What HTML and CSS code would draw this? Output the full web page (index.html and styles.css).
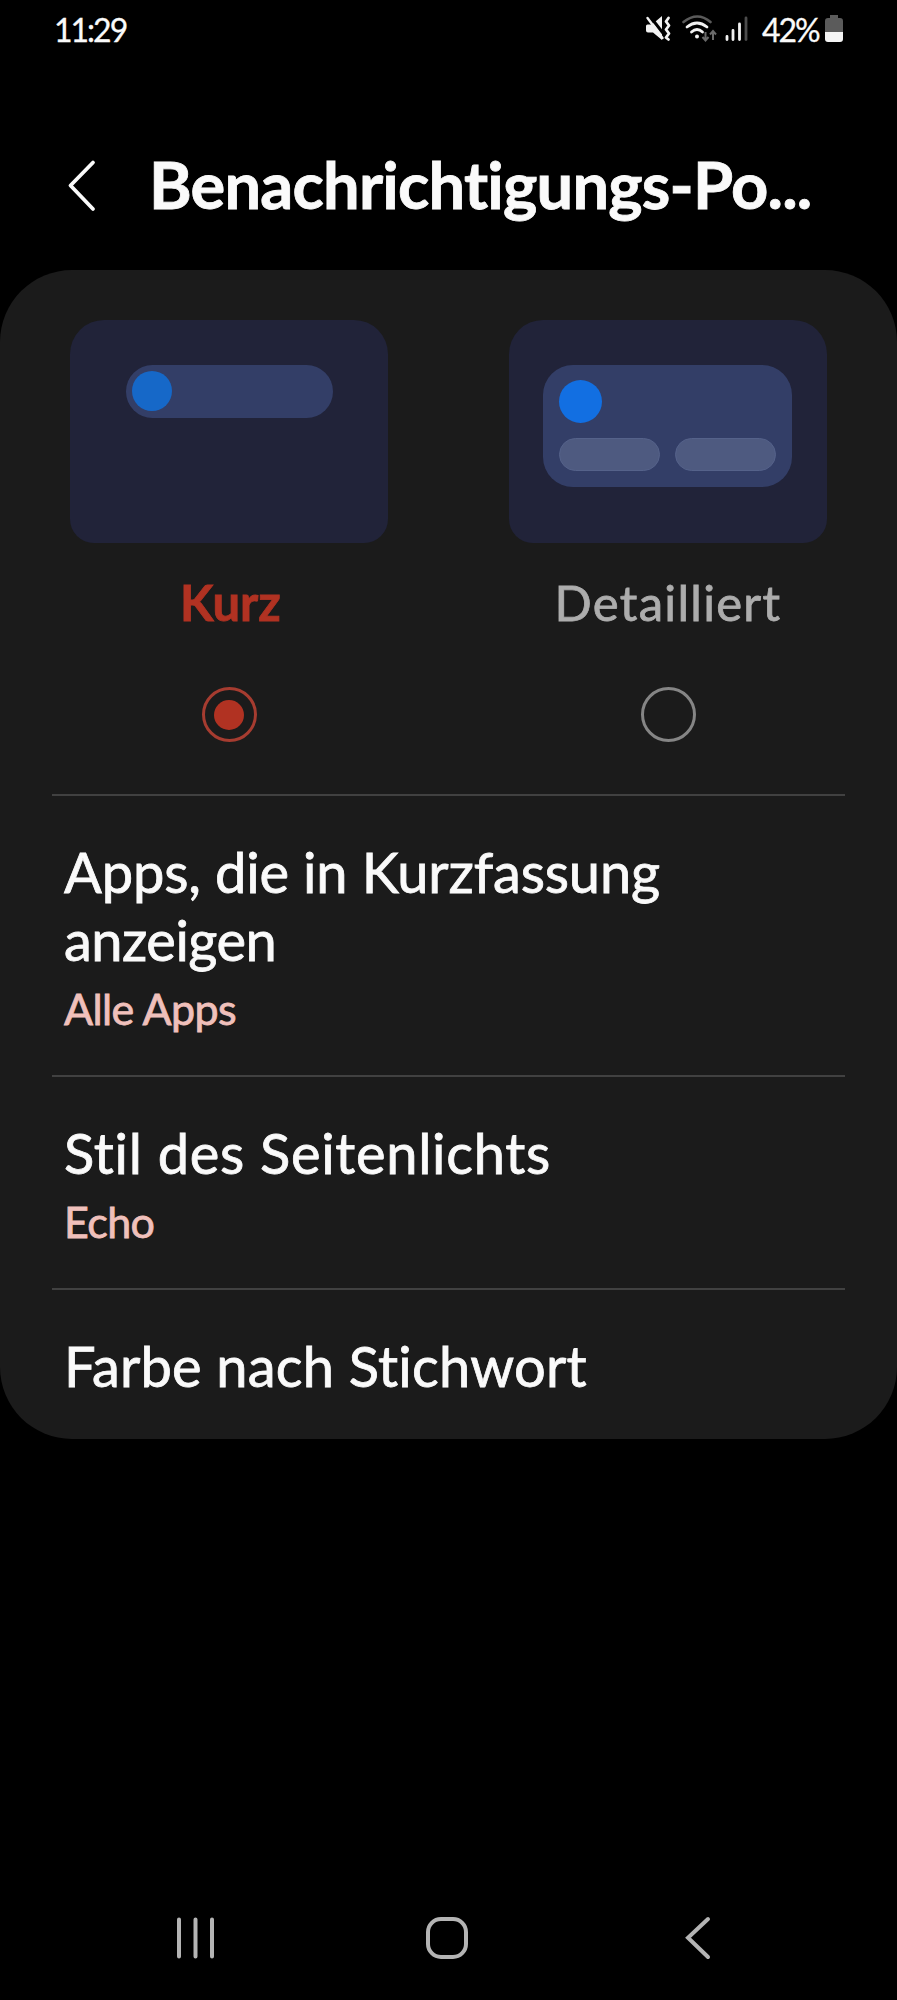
FILE: index.html
```html
<!DOCTYPE html>
<html lang="de">
<head>
<meta charset="utf-8">
<title>Benachrichtigungs-Pop-ups</title>
<link rel="stylesheet" href="styles.css">
</head>
<body>
<div class="screen">
  <header class="status">
    <span class="clock">11:29</span>
    <div class="status-icons">
      <svg class="system-icons" width="104" height="30" viewBox="0 0 104 30">
        <path d="M1 11q0-1.500 1.500-1.500H7L17 1v24L8 17.500H3q-2 0-2-2z" fill="#f2f2f2"/>
        <path d="M4 0l17 22" stroke="#000" stroke-width="3"/>
        <path d="M2.500 3l15 20" stroke="#f2f2f2" stroke-width="2.400" stroke-linecap="round"/>
        <path d="M23.500 3l-2.500 3.500 3 4-3 4 3 4-3 4 2.500 2" fill="none" stroke="#f2f2f2" stroke-width="2.800" stroke-linecap="round" stroke-linejoin="round"/>
        <g fill="none" stroke-linecap="round">
          <path d="M38.500 7q14-11 27 0" stroke="#5a5a5a" stroke-width="2.600"/>
          <path d="M42 12q10-8 20 0M46.500 17q5.500-5 11 0" stroke="#f2f2f2" stroke-width="2.800"/>
        </g>
        <circle cx="52" cy="21.500" r="2" fill="#f2f2f2"/>
        <path d="M60.500 17v8m-3-3l3 3.500 3-3.500M68 25v-9m-3 3.500l3-3.500 3 3.500" fill="none" stroke="#6a6a6a" stroke-width="2"/>
        <path d="M82 21.500v3M88 15.500v9M94.500 9v15.500" stroke="#f2f2f2" stroke-width="2.800" stroke-linecap="round"/>
        <path d="M101 3v21.500" stroke="#4c4c4c" stroke-width="2.800" stroke-linecap="round"/>
      </svg>
      <span class="percent">42%</span>
      <svg class="battery" width="18" height="28" viewBox="0 0 18 28">
        <path d="M5 0h8v3h2q3 0 3 3v11H0V6q0-3 3-3h2z" fill="#5b5b5b"/>
        <path d="M0 17h18v7q0 3-3 3H3q-3 0-3-3z" fill="#f4f4f4"/>
      </svg>
    </div>
  </header>

  <div class="titlebar">
    <svg class="back" width="30" height="54" viewBox="0 0 30 54"><path d="M26 4.500L3.500 27.500 26 51" fill="none" stroke="#fafafa" stroke-width="3.800" stroke-linecap="round" stroke-linejoin="round"/></svg>
    <h1 class="title">Benachrichtigungs-Po...</h1>
  </div>

  <main class="card">
    <section class="choices">
      <div class="choice selected">
        <div class="preview"><div class="brief"><i class="dot"></i></div></div>
        <span class="label">Kurz</span>
        <span class="radio"></span>
      </div>
      <div class="choice">
        <div class="preview"><div class="detail"><i class="dot"></i><div class="buttons"><i></i><i></i></div></div></div>
        <span class="label">Detailliert</span>
        <span class="radio"></span>
      </div>
    </section>
    <section class="row apps">
      <div class="name">Apps, die in Kurzfassung<br><span class="wrapped">anzeigen</span></div>
      <div class="value">Alle Apps</div>
    </section>
    <section class="row style">
      <div class="name">Stil des Seitenlichts</div>
      <div class="value">Echo</div>
    </section>
    <section class="row color">
      <div class="name">Farbe nach Stichwort</div>
    </section>
  </main>

  <nav class="navbar">
    <svg width="40" height="46" viewBox="0 0 40 46"><path d="M3 4.500v37M19.500 4.500v37M36 4.500v37" stroke="#b4b4b4" stroke-width="4" stroke-linecap="round"/></svg>
    <svg class="home" width="46" height="46" viewBox="0 0 46 46"><rect x="4" y="4" width="38" height="38" rx="13" fill="none" stroke="#b4b4b4" stroke-width="4"/></svg>
    <svg width="28" height="46" viewBox="0 0 28 46"><path d="M24 4L4 22.700 24 42" fill="none" stroke="#b4b4b4" stroke-width="4" stroke-linecap="round"/></svg>
  </nav>
</div>
</body>
</html>
```
FILE: styles.css
```css
* { box-sizing: border-box; }
body { margin: 0; background: #000; color: #fafafa; font-family: Lato, "Open Sans", sans-serif; font-variant-ligatures: none; }
.screen { width: 897px; height: 2000px; display: flex; flex-direction: column; overflow: hidden; background: #000; white-space: nowrap; -webkit-text-stroke: 0.8px currentColor; }
svg { display: block; flex: none; }

.status { height: 60px; padding: 0 54px 0 54px; display: flex; justify-content: space-between; align-items: flex-start; font-size: 32px; line-height: 40px; -webkit-text-stroke-width: 0.3px; }
.clock { padding-top: 10px; letter-spacing: -2px; }
.status-icons { display: flex; padding-top: 15px; }
.percent { margin: -5px 6px 0 13px; width: 57px; letter-spacing: -2px; }

.titlebar { height: 210px; padding: 98px 0 0 67px; display: flex; }
.title { margin: -10px 0 0 52px; font-size: 65px; line-height: 72px; font-weight: 700; letter-spacing: -0.8px; }

.card { height: 1169px; border-radius: 72px; background: #1b1b1b; overflow: hidden; }
.choices { height: 526px; margin: 0 52px; padding: 50px 18px 0; border-bottom: 2px solid #414141; display: flex; justify-content: space-between; }
.choice { width: 318px; display: flex; flex-direction: column; align-items: center; color: #adadad; }
.preview { width: 318px; height: 223px; padding: 45px 34px; border-radius: 34px 34px 24px 24px; background: #212339; }
.brief { width: 207px; height: 53px; margin-left: 22px; padding: 6px; border-radius: 27px; background: #333e67; }
.dot { display: block; width: 43px; height: 43px; border-radius: 50%; background: #126fe2; }
.brief .dot { width: 40px; height: 40px; background: #1668c8; }
.detail { width: 249px; height: 122px; padding: 15px 16px; border-radius: 30px; background: #333e67; }
.buttons { display: flex; justify-content: space-between; margin-top: 15px; }
.buttons i { width: 101px; height: 33px; border: 1px solid #55628a; border-radius: 17px; background: #4e5a80; }
.label { margin-top: 29px; height: 60px; font-size: 49px; line-height: 60px; letter-spacing: 1.3px; }
.selected { color: #b13222; }
.selected .label { padding-left: 3px; font-weight: 700; letter-spacing: 0; }
.radio { width: 55px; height: 55px; margin-top: 55px; padding: 9.500px; border: 3px solid #858585; border-radius: 50%; }
.selected .radio { border-color: #a63c30; }
.selected .radio::before { content: ""; display: block; width: 30px; height: 30px; border-radius: 50%; background: #b13222; }

.row { margin: 0 52px; padding-left: 12px; border-bottom: 2px solid #414141; }
.name { font-size: 56px; line-height: 68px; letter-spacing: -0.15px; }
.wrapped { letter-spacing: -0.5px; }
.value { margin-top: 8px; font-size: 43px; line-height: 54px; letter-spacing: -0.6px; color: #f0c0bb; }
.apps { height: 281px; padding-top: 42px; }
.style { height: 213px; padding-top: 42px; }
.style .name { letter-spacing: 0.7px; }
.color { height: 149px; padding-top: 42px; border-bottom: 0; }
.color .name { letter-spacing: 0.2px; }

.navbar { margin-top: auto; height: 85px; padding: 0 185px 0 176px; display: flex; justify-content: space-between; }
.home { margin: 0 3px 0 -3px; }
```
